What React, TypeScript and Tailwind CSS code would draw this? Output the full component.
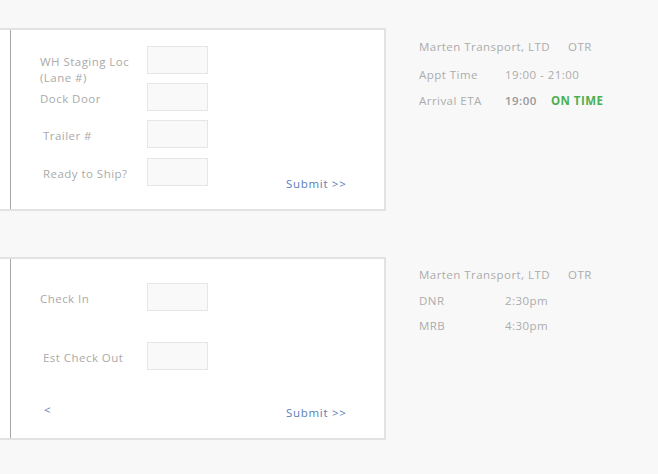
import React from 'react';

const font = { fontFamily: '"Open Sans", "Liberation Sans", sans-serif' };

const Box = () => <div className="h-[28px] w-[61px] shrink-0 border border-[#e6e6e6] bg-[#f9f9f9]" />;

const Row = ({ label, indent, children }: { label: React.ReactNode; indent?: boolean; children?: React.ReactNode }) => (
  <div className="flex h-[28px] items-start">
    <div className={`w-[107px] shrink-0 whitespace-nowrap pt-[8px] leading-[16px] ${indent ? 'pl-[3px]' : ''}`}>{label}</div>
    <Box />
    {children}
  </div>
);

const Card = ({ children }: { children: React.ReactNode }) => (
  <div className="flex h-[183px] w-[386px] border-y-2 border-r-2 border-[#e2e2e2] bg-white">
    <div className="ml-[10px] w-[1px] bg-[#a6a6a6]" />
    <div className="flex-1 pl-[29px]">{children}</div>
  </div>
);

const Submit = () => <span className="tracking-[0.06em] text-[#5a7db8]">Submit &gt;&gt;</span>;

export default function App() {
  return (
    <div className="min-h-[474px] w-[658px] bg-[#f8f8f8] pt-[28px] text-[11.5px] text-[#aaaaaa]" style={font}>
      <div className="flex">
        <div className="flex flex-col gap-[46px]">
          <Card>
            <div className="flex flex-col gap-[9px] pt-[16px] tracking-[0.04em]">
              <Row label={<>WH Staging Loc<br />(Lane #)</>} />
              <Row label="Dock Door" />
              <Row label="Trailer #" indent />
              <div className="mt-[1px]">
                <Row label="Ready to Ship?" indent>
                  <div className="ml-[78px] mt-[18px] whitespace-nowrap leading-[16px]">
                    <Submit />
                  </div>
                </Row>
              </div>
            </div>
          </Card>
          <Card>
            <div className="flex flex-col tracking-[0.04em]">
              <div className="flex flex-col gap-[31px] pt-[24px]">
                <Row label="Check In" />
                <Row label="Est Check Out" indent />
              </div>
              <div className="mt-[32px] flex items-start pl-[4px] leading-[16px]">
                <span className="text-[#5a7db8]">&lt;</span>
                <span className="ml-[235px] mt-[3px]">
                  <Submit />
                </span>
              </div>
            </div>
          </Card>
        </div>
        <div className="ml-[33px] flex flex-col tracking-[0.04em] text-[#acacac]">
          <div className="flex h-[183px] flex-col gap-[12px] pt-[11px] leading-[16px]">
            <div className="flex">
              <span className="w-[149px]">Marten Transport, LTD</span>
              <span>OTR</span>
            </div>
            <div className="flex">
              <span className="w-[86px]">Appt Time</span>
              <span>19:00 - 21:00</span>
            </div>
            <div className="-mt-[2px] flex">
              <span className="w-[86px]">Arrival ETA</span>
              <span className="w-[46px] font-semibold text-[#999]">19:00</span>
              <span className="font-bold text-[#4caf50]">ON TIME</span>
            </div>
          </div>
          <div className="mt-[46px] flex flex-col gap-[10px] pt-[10px] leading-[16px]">
            <div className="flex">
              <span className="w-[149px]">Marten Transport, LTD</span>
              <span>OTR</span>
            </div>
            <div className="flex">
              <span className="w-[86px]">DNR</span>
              <span>2:30pm</span>
            </div>
            <div className="-mt-[1px] flex">
              <span className="w-[86px]">MRB</span>
              <span>4:30pm</span>
            </div>
          </div>
        </div>
      </div>
    </div>
  );
}
